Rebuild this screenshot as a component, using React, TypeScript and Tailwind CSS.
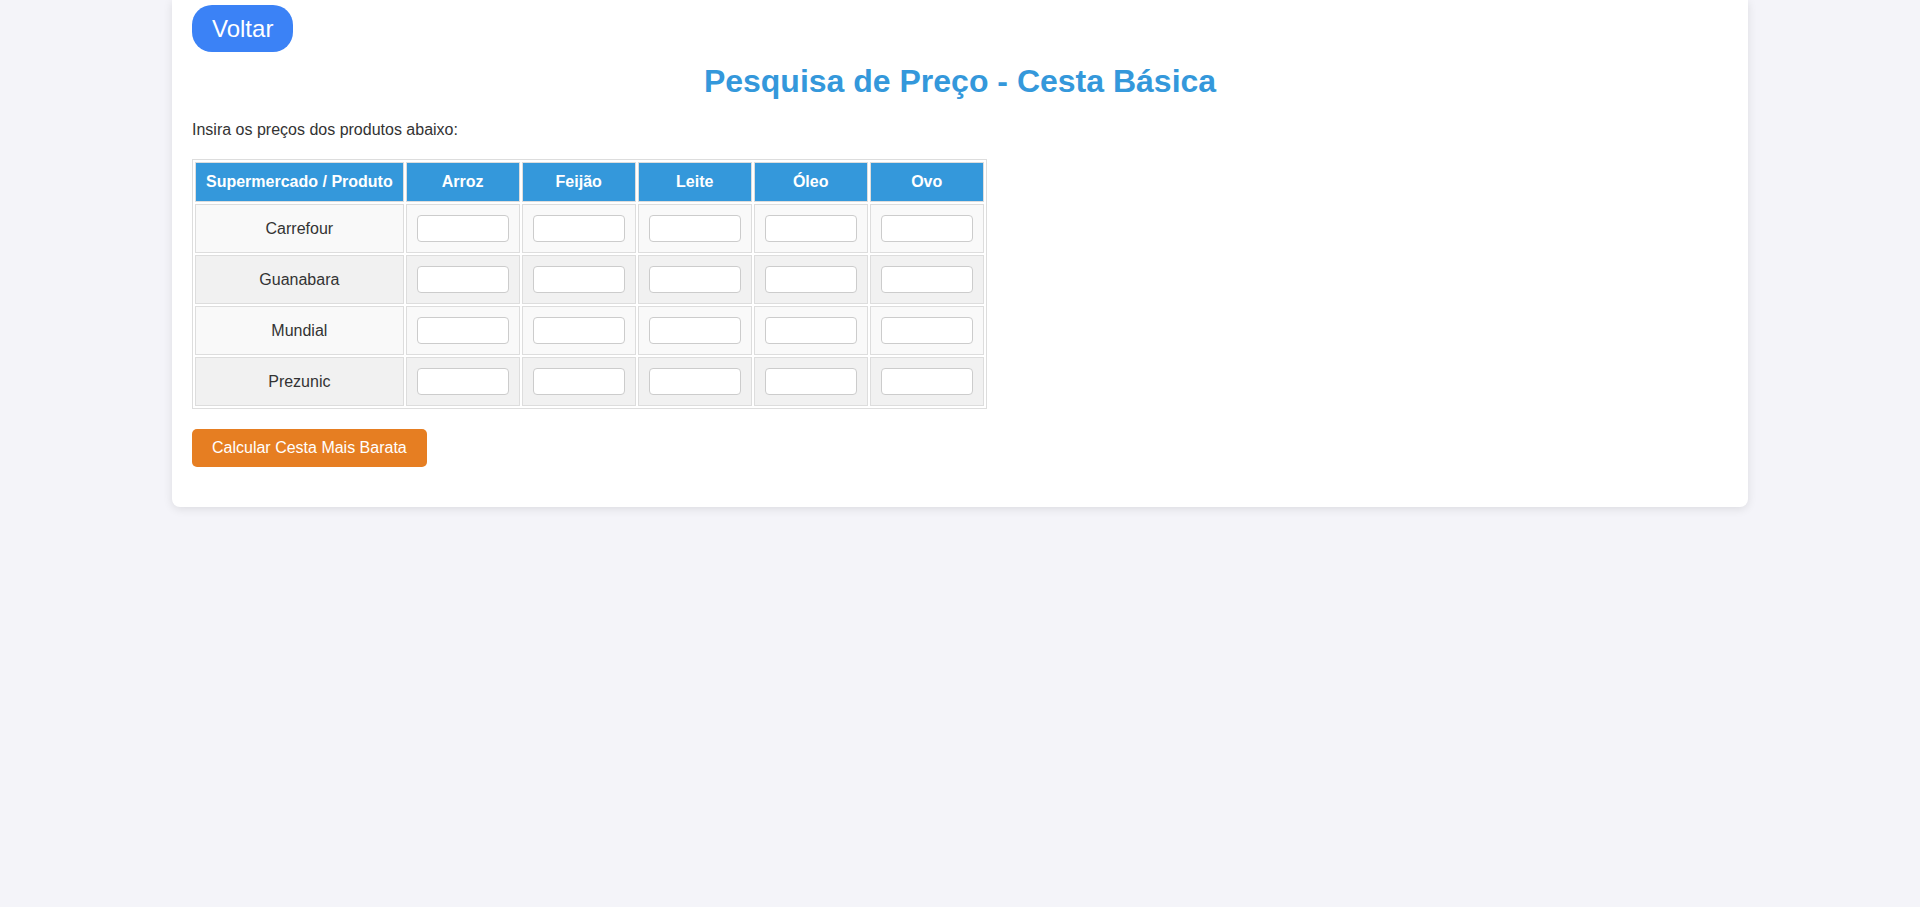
import { useState } from "react";

const produtos = ["Arroz", "Feijão", "Leite", "Óleo", "Ovo"];
const mercados = ["Carrefour", "Guanabara", "Mundial", "Prezunic"];

export default function App() {
  const [precos, setPrecos] = useState<Record<string, string>>({});

  const handleChange = (key: string, value: string) => {
    setPrecos({ ...precos, [key]: value });
  };

  return (
    <div className="min-h-[907px] bg-[#f4f4f9] font-['Liberation_Sans',Arial,sans-serif] text-[#333]">
      <div className="mx-auto w-[1576px] rounded-b-lg bg-white px-[20px] pt-[5px] pb-[40px] shadow-[0_2px_10px_rgba(0,0,0,0.1)]">
        <button className="h-[47px] rounded-[20px] bg-[#3b82f6] px-[20px] text-[24px] text-white">
          Voltar
        </button>

        <h1 className="mt-[11px] text-center text-[32px] leading-[37px] font-bold text-[#3498db]">
          Pesquisa de Preço - Cesta Básica
        </h1>

        <p className="mt-[21px] text-[16px] leading-[18px]">Insira os preços dos produtos abaixo:</p>

        <table className="mt-[20px] border-separate border-spacing-[2px] border border-[#ddd] text-[16px]">
          <thead>
            <tr>
              <th className="border border-[#ddd] bg-[#3498db] p-[10px] leading-[18px] font-bold text-white">
                Supermercado / Produto
              </th>
              {produtos.map((p) => (
                <th key={p} className="border border-[#ddd] bg-[#3498db] p-[10px] leading-[18px] font-bold text-white">
                  {p}
                </th>
              ))}
            </tr>
          </thead>
          <tbody>
            {mercados.map((m, i) => (
              <tr key={m} className={i % 2 === 0 ? "bg-[#f9f9f9]" : "bg-[#f1f1f1]"}>
                <td className="border border-[#ddd] p-[10px] text-center leading-[18px]">{m}</td>
                {produtos.map((p) => (
                  <td key={p} className="border border-[#ddd] p-[10px]">
                    <input
                      type="number"
                      value={precos[m + p] || ""}
                      onChange={(e) => handleChange(m + p, e.target.value)}
                      className="mx-auto block h-[27px] w-[92px] rounded-[4px] border border-[#ccc] bg-white px-[5px] text-[14px] [appearance:textfield]"
                    />
                  </td>
                ))}
              </tr>
            ))}
          </tbody>
        </table>

        <button className="mt-[20px] h-[38px] rounded-[5px] bg-[#e67e22] px-[20px] text-[16px] text-white">
          Calcular Cesta Mais Barata
        </button>
      </div>
    </div>
  );
}
